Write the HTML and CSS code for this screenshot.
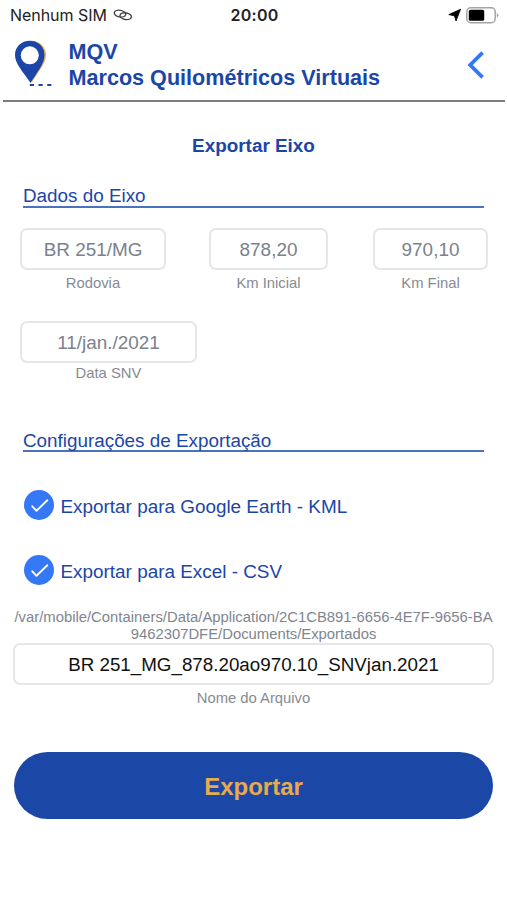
FILE: index.html
```html
<!DOCTYPE html>
<html lang="pt-BR">
<head>
<meta charset="utf-8">
<title>MQV</title>
<link rel="stylesheet" href="styles.css">
</head>
<body>
<div class="status">
  <div class="carrier">
    <span>Nenhum SIM</span>
    <svg class="link" width="20" height="12" viewBox="0 0 20 12" fill="none" stroke="#444" stroke-width="1.400">
      <ellipse cx="7" cy="4.600" rx="5.800" ry="3.300" transform="rotate(10 7 4.600)"/>
      <ellipse cx="12.700" cy="7.200" rx="5.800" ry="3.300" transform="rotate(10 12.700 7.200)"/>
    </svg>
  </div>
  <time class="clock">20:00</time>
  <div class="indicators">
    <svg width="14" height="14" viewBox="0 0 14 14"><path d="M12.600 1.200 8 13 6.500 7.900.8 6.600z" fill="#000" stroke="#000" stroke-width=".8" stroke-linejoin="round"/></svg>
    <svg width="33" height="17" viewBox="0 0 33 17">
      <rect x=".8" y=".8" width="28.400" height="14.900" rx="4" fill="#fff" stroke="#a3a3a3" stroke-width="1.500"/>
      <rect x="2.800" y="2.800" width="15.400" height="11" rx="1.600" fill="#000"/>
      <path d="M30.800 6v4.500q1.600-.7 1.600-2.200T30.800 6" fill="#a3a3a3"/>
    </svg>
  </div>
</div>
<header class="header">
  <svg class="pin" width="40" height="48" viewBox="0 0 40 48">
    <path d="M17.500 1C26 1 32 7 32 15c0 8.500-8 17-14.500 28z" fill="#e9ac55"/>
    <path d="M15.800.8C7.300.8 1 7 1 15c0 9 8 16.500 15.500 28C22.500 33 30.500 24 30.500 15c0-8-6.200-14.200-14.700-14.200z" fill="#1b46a8"/>
    <circle cx="15.800" cy="15.300" r="9" fill="#fff"/>
    <path d="M15.800 45h4.200M24.500 45h4.200M33.200 45h4.200" stroke="#1b46a8" stroke-width="2"/>
  </svg>
  <h1 class="brand">MQV<br>Marcos Quilométricos Virtuais</h1>
  <svg class="back" width="18" height="28" viewBox="0 0 18 28" fill="none" stroke="#3478f6" stroke-width="3.800"><path d="M15.600 1.700 3.200 14l12.400 12.300"/></svg>
</header>
<main>
  <h2 class="title">Exportar Eixo</h2>
  <h3 class="section">Dados do Eixo</h3>
  <div class="fields">
    <div class="field road"><div class="box">BR 251/MG</div><label>Rodovia</label></div>
    <div class="field start"><div class="box">878,20</div><label>Km Inicial</label></div>
    <div class="field end"><div class="box">970,10</div><label>Km Final</label></div>
  </div>
  <div class="field date"><div class="box">11/jan./2021</div><label>Data SNV</label></div>
  <h3 class="section config">Configurações de Exportação</h3>
  <div class="option">
    <svg width="30" height="30" viewBox="0 0 30 30"><circle cx="15" cy="15" r="15" fill="#3478f6"/><path d="m8.300 16.300 4.200 4.500L23.300 10.300" fill="none" stroke="#fff" stroke-width="1.900" stroke-linecap="round" stroke-linejoin="round"/></svg>
    <span>Exportar para Google Earth - KML</span>
  </div>
  <div class="option">
    <svg width="30" height="30" viewBox="0 0 30 30"><circle cx="15" cy="15" r="15" fill="#3478f6"/><path d="m8.300 16.300 4.200 4.500L23.300 10.300" fill="none" stroke="#fff" stroke-width="1.900" stroke-linecap="round" stroke-linejoin="round"/></svg>
    <span>Exportar para Excel - CSV</span>
  </div>
  <p class="path">/var/mobile/Containers/Data/Application/2C1CB891-6656-4E7F-9656-BA<br>9462307DFE/Documents/Exportados</p>
  <div class="field file"><div class="box">BR 251_MG_878.20ao970.10_SNVjan.2021</div><label>Nome do Arquivo</label></div>
  <button class="export">Exportar</button>
</main>
</body>
</html>
```

FILE: styles.css
```css
* { box-sizing: border-box; }
body {
  margin: 0;
  width: 507px;
  height: 900px;
  overflow: hidden;
  background: #fff;
  font-family: "Liberation Sans", Arial, sans-serif;
  color: #1b46a8;
}
h1, h2, h3, p { margin: 0; font-weight: 400; }
svg { display: block; flex: none; }
.status {
  height: 30px;
  padding: 0 8px 0 10px;
  display: grid;
  grid-template-columns: 1fr auto 1fr;
  align-items: center;
  font-family: Inter, sans-serif;
  font-size: 16px;
  color: #222;
}
.carrier { display: flex; align-items: center; gap: 6px; letter-spacing: -0.05px; }
.clock { font-weight: 600; letter-spacing: 0.3px; }
.indicators { display: flex; align-items: center; justify-content: flex-end; gap: 4px; }
.header {
  height: 72px;
  margin: 0 2px 0 3px;
  border-bottom: 2px solid #7c7c7c;
  display: flex;
  padding: 9px 20px 0 11px;
}
.pin { margin-top: 1px; }
.brand {
  margin-left: 14.5px;
  font-size: 21.6px;
  line-height: 26px;
  font-weight: 700;
}
.back { margin: 12px 0 0 auto; }
.title {
  margin-top: 33px;
  text-align: center;
  font-size: 18.9px;
  line-height: 22px;
  font-weight: 700;
}
.section {
  margin: 28px 23px 0 23px;
  height: 23px;
  border-bottom: 2px solid #4a73be;
  font-size: 18.85px;
  line-height: 22px;
}
.config { margin-top: 47px; line-height: 24px; }
.fields {
  display: flex;
  margin: 20px 19px 0 20px;
}
.field { text-align: center; }
.box {
  height: 42px;
  border: 2px solid #e5e6e8;
  border-radius: 7px;
  font-size: 18.9px;
  line-height: 40px;
  color: #7a828c;
}
.field label {
  display: block;
  margin-top: 5px;
  font-size: 14.8px;
  line-height: 17px;
  color: #858b94;
}
.road { width: 146px; }
.start { width: 119px; margin-left: 43px; }
.end { width: 115px; margin-left: auto; }
.date { width: 177px; margin: 29px 0 0 20px; }
.date label { margin-top: 2px; }
.option {
  display: flex;
  align-items: center;
  gap: 6.5px;
  height: 30px;
  margin: 38px 0 0 24px;
  font-size: 18.9px;
}
.option span { padding-top: 3px; }
.option + .option { margin-top: 35px; }
.path {
  margin-top: 24px;
  text-align: center;
  font-size: 14.84px;
  line-height: 17px;
  color: #7f858e;
}
.file { margin: 0 13px; }
.file .box { color: #111; font-size: 18.8px; }
.export {
  display: block;
  width: 479px;
  height: 67px;
  margin: 45px 0 0 14px;
  padding: 2px 0 0;
  border: 0;
  border-radius: 34px;
  background: #1b47a6;
  color: #e8aa50;
  font: 700 24px "Liberation Sans", Arial, sans-serif;
}
```
